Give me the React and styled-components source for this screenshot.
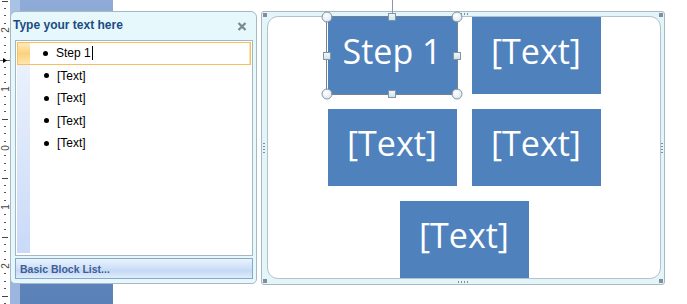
import React from "react";
import styled, { createGlobalStyle, css } from "styled-components";

const Global = createGlobalStyle`
  html, body { margin: 0; padding: 0; background: #fff; }
  body { font-family: "Liberation Sans", Arial, sans-serif; }
`;

const Page = styled.div`
  display: flex;
  align-items: flex-start;
  width: 687px;
  height: 304px;
  overflow: hidden;
  background: #fff;
`;

const RulerWrap = styled.div`
  flex: none;
  width: 10px;
  height: 304px;
  background: #fff;
  svg { display: block; }
`;

const SlideStrip = styled.div`
  flex: none;
  width: 250px;
  height: 304px;
  box-sizing: border-box;
  padding-top: 11px;
  background:
    linear-gradient(#aac2e6, #9bb5df) 0 0 / 10px 100% no-repeat,
    linear-gradient(#8fabd7, #5a81b8) 10px 0 / 93px 100% no-repeat,
    #fff;
`;

const Pane = styled.div`
  width: 247px;
  height: 273px;
  box-sizing: border-box;
  border: 1px solid #a6b8c4;
  border-radius: 6px 6px 5px 5px;
  background: #e6f8fc;
  display: flex;
  flex-direction: column;
`;

const PaneHeader = styled.div`
  flex: none;
  height: 28px;
  display: flex;
  align-items: center;
  justify-content: space-between;
  padding: 0 9px 2px 2px;
  box-sizing: border-box;
`;

const PaneTitle = styled.span`
  font: bold 12px "Liberation Sans", Arial, sans-serif;
  color: #1c4b82;
`;

const CloseButton = styled.span`
  display: flex;
  margin-top: 3px;
`;

const List = styled.div`
  flex: none;
  height: 216px;
  box-sizing: border-box;
  margin: 0 3px 0 4px;
  padding: 1px 1px 0 1px;
  border: 1px solid #a7b7c0;
  background:
    linear-gradient(#eef4fd, #c9d9f7) 1px 1px / 13px calc(100% - 3px) no-repeat,
    #fff;
`;

const Row = styled.div`
  height: 22.5px;
  box-sizing: border-box;
  display: flex;
  align-items: stretch;
  ${(p) =>
    p.$active &&
    css`
      border: 1px solid #f7bf5f;
      box-shadow: inset -1px 0 0 #fde3ac;
      background: #fff;
    `}
`;

const Gutter = styled.div`
  flex: none;
  width: ${(p) => (p.$active ? "12px" : "13px")};
  background: ${(p) =>
    p.$active ? "linear-gradient(#fdebbd, #fbd27a 50%, #fde6b0)" : "transparent"};
`;

const RowBody = styled.div`
  display: flex;
  align-items: center;
  padding-left: ${(p) => (p.$active ? "13px" : "14px")};
  font: 12px "Liberation Sans", Arial, sans-serif;
  color: #000;
`;

const Bullet = styled.span`
  width: 5px;
  height: 5px;
  border-radius: 50%;
  background: #000;
  margin-right: 8px;
  flex: none;
`;

const Caret = styled.span`
  display: inline-block;
  width: 1px;
  height: 14px;
  background: #000;
  margin-left: 1px;
  vertical-align: -3px;
`;

const Footer = styled.div`
  flex: none;
  height: 21px;
  box-sizing: border-box;
  margin: 2px 3px 0 4px;
  border: 1px solid #86aacd;
  background: linear-gradient(#eaf3fd, #cde0f7 50%, #c3d9f5 60%, #e0ecfb);
  display: flex;
  align-items: center;
  padding-left: 4px;
  font: bold 10.5px "Liberation Sans", Arial, sans-serif;
  color: #3c5d96;
`;

const Frame = styled.div`
  position: relative;
  flex: none;
  margin: 11px 0 0 1px;
  width: 404px;
  height: 274px;
  box-sizing: border-box;
  border: 1px solid #a9b9c3;
  border-radius: 3px;
  background: #e3f5f9;
  padding: 4px 3px 5px 5px;
`;

const Canvas = styled.div`
  height: 100%;
  box-sizing: border-box;
  border: 1px solid #b3c3cb;
  border-radius: 11px;
  background: #fff;
  display: flex;
  flex-direction: column;
  align-items: center;
  gap: 15px;
`;

const BlockRow = styled.div`
  display: flex;
  gap: 15px;
`;

const Block = styled.div`
  position: relative;
  width: 129px;
  height: 77px;
  background: #4f81bd;
  color: #fff;
  display: flex;
  align-items: center;
  justify-content: center;
  box-sizing: border-box;
  padding-bottom: 9px;
  font: 34px "Open Sans", "Noto Sans", sans-serif;
  line-height: 1;
  white-space: nowrap;
`;

const Selection = styled.div`
  position: absolute;
  inset: -1px -1px -1px -2px;
  border: 1px solid #6f8394;
  pointer-events: none;
`;

const Stalk = styled.div`
  position: absolute;
  left: 50%;
  top: -17px;
  width: 1px;
  height: 13px;
  background: #8797a3;
`;

const Handle = styled.span`
  position: absolute;
  left: ${(p) => p.$x};
  top: ${(p) => p.$y};
  transform: translate(-50%, -50%);
  box-sizing: border-box;
  ${(p) =>
    p.$round
      ? css`
          width: 11px;
          height: 11px;
          border-radius: 50%;
          border: 1px solid #8494a0;
          background: radial-gradient(circle at 40% 35%, #ffffff, #d4e3ec);
        `
      : css`
          width: 8px;
          height: 8px;
          border: 1px solid #8294a2;
          background: linear-gradient(#eef7fb, #cfe4ef);
        `}
`;

const gripPlace = {
  tl: css`top: 1px; left: 1px; width: 4px; height: 4px;`,
  tr: css`top: 1px; right: 1px; width: 4px; height: 4px;`,
  bl: css`bottom: 1px; left: 1px; width: 4px; height: 4px;`,
  br: css`bottom: 1px; right: 1px; width: 4px; height: 4px;`,
  t: css`top: 1px; left: 50%; margin-left: -6px; width: 12px; height: 2px;`,
  b: css`bottom: 1px; left: 50%; margin-left: -6px; width: 12px; height: 2px;`,
  l: css`left: 1px; top: 50%; margin-top: -6px; width: 2px; height: 12px;`,
  r: css`right: 1px; top: 50%; margin-top: -6px; width: 2px; height: 12px;`,
};

const Grip = styled.span`
  position: absolute;
  ${(p) => gripPlace[p.$at]}
  background-image: radial-gradient(circle, #7f8e99 0.75px, transparent 1px);
  background-size: ${(p) => (p.$at.length === 2 ? "2px 2px" : p.$at === "t" || p.$at === "b" ? "3px 2px" : "2px 3px")};
`;

function Ruler() {
  const unit = 59;
  const zero = 148;
  const marks = [];
  for (let k = -24; k <= 24; k++) {
    const y = zero + (k * unit) / 8;
    if (y < 0 || y > 304) continue;
    if (k % 8 === 0) {
      const n = Math.abs(k / 8);
      marks.push(
        <text
          key={k}
          x="5"
          y={y}
          fontSize="10"
          fill="#444"
          fontFamily="Liberation Sans, Arial, sans-serif"
          textAnchor="middle"
          dominantBaseline="central"
          transform={`rotate(-90 5 ${y})`}
        >
          {n}
        </text>
      );
    } else if (k % 4 === 0) {
      marks.push(<rect key={k} x="2" y={Math.round(y)} width="6" height="1" fill="#444" />);
    } else {
      marks.push(<rect key={k} x="4" y={Math.round(y)} width="2" height="1" fill="#555" />);
    }
  }
  return (
    <RulerWrap>
      <svg width="10" height="304" viewBox="0 0 10 304">
        {marks}
        <rect x="0" y="60" width="10" height="1" fill="#666" />
        <path d="M3 58 L7 60.5 L3 63 Z" fill="#000" />
      </svg>
    </RulerWrap>
  );
}

const items = ["Step 1", "[Text]", "[Text]", "[Text]", "[Text]"];

export default function App() {
  return (
    <>
      <Global />
      <Page>
        <Ruler />
        <SlideStrip>
          <Pane>
            <PaneHeader>
              <PaneTitle>Type your text here</PaneTitle>
              <CloseButton>
                <svg width="10" height="9" viewBox="0 0 10 9">
                  <path d="M1.5 1 L8.5 8 M8.5 1 L1.5 8" stroke="#7b8690" strokeWidth="2.2" />
                </svg>
              </CloseButton>
            </PaneHeader>
            <List>
              {items.map((t, i) => (
                <Row key={i} $active={i === 0}>
                  <Gutter $active={i === 0} />
                  <RowBody $active={i === 0}>
                    <Bullet />
                    <span>
                      {t}
                      {i === 0 && <Caret />}
                    </span>
                  </RowBody>
                </Row>
              ))}
            </List>
            <Footer>Basic Block List...</Footer>
          </Pane>
        </SlideStrip>
        <Frame>
          <Grip $at="tl" />
          <Grip $at="tr" />
          <Grip $at="bl" />
          <Grip $at="br" />
          <Grip $at="t" />
          <Grip $at="b" />
          <Grip $at="l" />
          <Grip $at="r" />
          <Canvas>
            <BlockRow>
              <Block>
                Step 1
                <Selection>
                  <Stalk />
                  <Handle $round $x="0%" $y="0%" />
                  <Handle $x="50%" $y="0%" />
                  <Handle $round $x="100%" $y="0%" />
                  <Handle $x="0%" $y="50%" />
                  <Handle $x="100%" $y="50%" />
                  <Handle $round $x="0%" $y="100%" />
                  <Handle $x="50%" $y="100%" />
                  <Handle $round $x="100%" $y="100%" />
                </Selection>
              </Block>
              <Block>[Text]</Block>
            </BlockRow>
            <BlockRow>
              <Block>[Text]</Block>
              <Block>[Text]</Block>
            </BlockRow>
            <BlockRow>
              <Block>[Text]</Block>
            </BlockRow>
          </Canvas>
        </Frame>
      </Page>
    </>
  );
}
